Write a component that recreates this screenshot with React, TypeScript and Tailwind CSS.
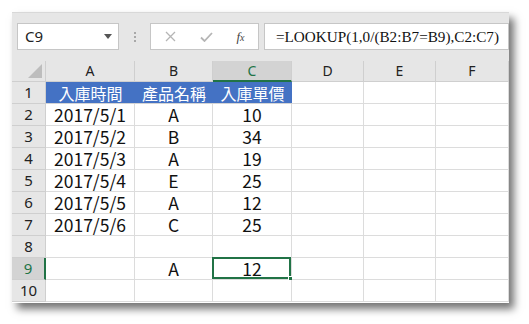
import React from "react";

const cols = ["A", "B", "C", "D", "E", "F"];
const data: string[][] = [
  ["入庫時間", "產品名稱", "入庫單價", "", "", ""],
  ["2017/5/1", "A", "10", "", "", ""],
  ["2017/5/2", "B", "34", "", "", ""],
  ["2017/5/3", "A", "19", "", "", ""],
  ["2017/5/4", "E", "25", "", "", ""],
  ["2017/5/5", "A", "12", "", "", ""],
  ["2017/5/6", "C", "25", "", "", ""],
  ["", "", "", "", "", ""],
  ["", "A", "12", "", "", ""],
  ["", "", "", "", "", ""],
];

const cjk = { fontFamily: '"Noto Sans CJK TC", "Noto Sans", sans-serif' };
const ui = { fontFamily: '"Noto Sans", "Liberation Sans", sans-serif' };

export default function App() {
  return (
    <div className="w-[529px] h-[324px] bg-white pl-[12px] pt-[12px]">
      <div className="w-[497px] h-[291px] bg-white shadow-[5px_6px_8px_rgba(0,0,0,0.55)] border-t border-[#d8d8d8] flex flex-col overflow-hidden">
        {/* toolbar */}
        <div className="h-[48px] bg-[#e6e6e6] flex items-start pt-[10px] pl-[5px]">
          <div className="w-[102px] h-[27px] bg-white border border-[#c6c6c6] flex items-center justify-between pl-[7px] pr-[6px]">
            <span className="text-[15px] leading-none text-[#222]" style={ui}>C9</span>
            <svg width="8" height="5" viewBox="0 0 8 5"><path d="M0 0h8L4 5z" fill="#555" /></svg>
          </div>
          <div className="w-[31px] h-[27px] flex flex-col items-center justify-center gap-[2px]">
            <span className="w-[2px] h-[2px] bg-[#a8a8a8]" />
            <span className="w-[2px] h-[2px] bg-[#a8a8a8]" />
            <span className="w-[2px] h-[2px] bg-[#a8a8a8]" />
          </div>
          <div className="w-[109px] h-[27px] bg-white border border-[#c6c6c6] flex items-center">
            <div className="w-[38px] flex justify-center">
              <svg width="11" height="11" viewBox="0 0 11 11"><path d="M1 1L10 10M10 1L1 10" stroke="#b5b5b5" strokeWidth="1.3" /></svg>
            </div>
            <div className="w-[34px] flex justify-center">
              <svg width="13" height="10" viewBox="0 0 13 10"><path d="M1 5.5L4.5 9L12 1" stroke="#b5b5b5" strokeWidth="1.8" fill="none" /></svg>
            </div>
            <div className="w-[35px] flex justify-center">
              <span className="italic text-[13px] leading-none text-[#444]" style={{ fontFamily: '"Liberation Serif", serif' }}>
                f<span className="text-[10px]">x</span>
              </span>
            </div>
          </div>
          <div className="ml-[5px] w-[245px] h-[27px] bg-white border border-[#c6c6c6] flex items-center pl-[11px]">
            <span className="text-[15.2px] leading-none text-[#111] whitespace-nowrap" style={{ fontFamily: '"Liberation Serif", serif' }}>
              =LOOKUP(1,0/(B2:B7=B9),C2:C7)
            </span>
          </div>
        </div>
        {/* grid */}
        <div className="grid grid-cols-[34px_89px_78px_79px_72px_72px_73px] grid-rows-[21px_repeat(10,22px)]">
          <div className="bg-[#e6e6e6] border-r border-b border-[#cfcfcf] flex items-end justify-end pr-[3px] pb-[3px]">
            <svg width="14" height="14" viewBox="0 0 14 14"><path d="M14 0V14H0z" fill="#bdbdbd" /></svg>
          </div>
          {cols.map((c) =>
            c === "C" ? (
              <div key={c} className="bg-[#d3d3d3] border-r border-b-2 border-r-[#cfcfcf] border-b-[#217346] flex items-center justify-center text-[14px] leading-none text-[#217346]" style={ui}>
                {c}
              </div>
            ) : (
              <div key={c} className="bg-[#e6e6e6] border-r border-b border-[#cfcfcf] flex items-center justify-center text-[14px] leading-none text-[#222]" style={ui}>
                {c}
              </div>
            )
          )}
          {data.map((row, ri) => (
            <React.Fragment key={ri}>
              {ri === 8 ? (
                <div className="bg-[#d3d3d3] border-r-2 border-b border-r-[#217346] border-b-[#cfcfcf] flex items-center justify-center text-[15px] leading-none text-[#217346]" style={ui}>
                  {ri + 1}
                </div>
              ) : (
                <div className="bg-[#e6e6e6] border-r border-b border-[#cfcfcf] flex items-center justify-center text-[15px] leading-none text-[#222]" style={ui}>
                  {ri + 1}
                </div>
              )}
              {row.map((v, ci) => {
                const head = ri === 0 && ci < 3;
                const sel = ri === 8 && ci === 2;
                return (
                  <div
                    key={ci}
                    className={
                      head
                        ? "relative bg-[#4472c4] border-b border-[#d4d4d4] flex items-center justify-center text-[16px] leading-none text-white"
                        : "relative bg-white border-r border-b border-[#dcdcdc] flex items-center justify-center text-[17.5px] leading-none text-[#111]"
                    }
                    style={cjk}
                  >
                    {v}
                    {sel && (
                      <>
                        <div className="absolute -left-[1px] -top-[1px] right-0 bottom-0 border-2 border-[#217346]" />
                        <div className="absolute -right-[3px] -bottom-[3px] w-[6px] h-[6px] bg-[#217346] border border-white" />
                      </>
                    )}
                  </div>
                );
              })}
            </React.Fragment>
          ))}
        </div>
      </div>
    </div>
  );
}
